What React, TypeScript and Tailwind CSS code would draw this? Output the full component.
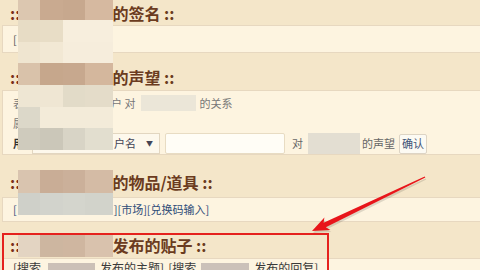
import React from 'react';

const font = { fontFamily: '"Noto Sans CJK SC", "Noto Sans", sans-serif' };

const colW = ['w-[22px]', 'w-[23px]', 'w-[22px]', 'w-[28px]'];

// mosaic over the blurred user name, top to bottom
const mosaic: { h: string; c: string[] | null }[] = [
  { h: 'h-[20px]', c: ['bg-[#dcc7b0]', 'bg-[#c9aa90]', 'bg-[#c7a88e]', 'bg-[#d6b9a0]'] },
  { h: 'h-[22px]', c: ['bg-[#e7dcc5]', 'bg-[#e8ddc6]', 'bg-[#f7eedd]', 'bg-[#f7eedd]'] },
  { h: 'h-[21px]', c: ['bg-[#efe5d0]', 'bg-[#f2e8d4]', 'bg-[#f6eddc]', 'bg-[#f6eddc]'] },
  { h: 'h-[22px]', c: ['bg-[#d9c2aa]', 'bg-[#c6a78c]', 'bg-[#c7a88e]', 'bg-[#d4b79d]'] },
  { h: 'h-[22px]', c: ['bg-[#eee6d3]', 'bg-[#efe6d3]', 'bg-[#e2dbc8]', 'bg-[#e4dcc9]'] },
  { h: 'h-[21px]', c: ['bg-[#dcd8c9]', 'bg-[#f3ebd9]', 'bg-[#f3ebd9]', 'bg-[#f3ebd9]'] },
  { h: 'h-[22px]', c: ['bg-[#cfcbbd]', 'bg-[#cbc7b9]', 'bg-[#d8d4c6]', 'bg-[#e2decf]'] },
  { h: 'h-[20px]', c: null },
  { h: 'h-[23px]', c: ['bg-[#d9c4af]', 'bg-[#c9ad96]', 'bg-[#cbb09a]', 'bg-[#d4bba5]'] },
  { h: 'h-[22px]', c: ['bg-[#cfd0c9]', 'bg-[#d2d3cc]', 'bg-[#d4d5cd]', 'bg-[#d2d3cb]'] },
  { h: 'h-[18px]', c: null },
  { h: 'h-[24px]', c: ['bg-[#e3d4c2]', 'bg-[#cdb6a0]', 'bg-[#cfb6a0]', 'bg-[#d9c2ad]'] },
];

function Title({ text }: { text: string }) {
  return (
    <div className="flex items-center pl-[10px] text-[16px] leading-[20px] font-bold text-[#6b3b20]">
      <span className="text-[#7a2e1c]">::</span>
      <span className="inline-block w-[92px]" />
      <span>{text} ::</span>
    </div>
  );
}

const row = 'ml-[2px] bg-[#fdf4e0] border-y border-l border-[#e7d8c0]';

export default function App() {
  return (
    <div className="relative w-[480px] h-[270px] overflow-hidden bg-[#f4e6c9]" style={font}>
      {/* 签名 */}
      <div className="h-[25px] flex items-center">
        <Title text="的签名" />
      </div>
      <div className={`${row} h-[28px] flex items-center pl-[10px] text-[11px] text-[#555]`}>[</div>

      {/* 声望 */}
      <div className="h-[37px] pt-[14px]">
        <Title text="的声望" />
      </div>
      <div className={`${row} h-[65px] pt-[2px] pl-[10px] text-[11px] text-[#777]`}>
        <div className="h-[20px] flex items-center">
          <span>表</span>
          <span className="ml-[87px]">户 对</span>
          <span className="ml-[6px] inline-block w-[55px] h-[16px] bg-[#ebe6d8]" />
          <span className="ml-[3px]">的关系</span>
        </div>
        <div className="h-[20px] flex items-center">属</div>
        <div className="h-[21px] flex items-center">
          <span className="font-bold text-[#333]">用</span>
          <div className="ml-[8px] w-[128px] h-[21px] border border-[#e2d6c0] bg-[#fdf8ec] flex items-center justify-end pr-[6px] text-[#445]">
            <span className="mr-[10px]">户名</span>
            <span className="text-[7px]">▼</span>
          </div>
          <div className="ml-[5px] w-[120px] h-[21px] border border-[#e8dcc3] bg-[#fffdf6] rounded-[2px]" />
          <span className="ml-[7px] text-[#666]">对</span>
          <span className="ml-[5px] inline-block w-[52px] h-[21px] bg-[#e3ded2]" />
          <span className="ml-[2px] text-[#666]">的声望</span>
          <span className="ml-[4px] h-[20px] px-[2px] flex items-center border border-[#ddd4c4] bg-[#fcfaf3] rounded-[2px] text-[#3f5478]">确认</span>
        </div>
      </div>

      {/* 物品/道具 */}
      <div className="h-[42px] pt-[17px]">
        <Title text="的物品/道具" />
      </div>
      <div className={`${row} h-[25px] flex items-center pl-[10px] text-[11px] text-[#2f4d78]`}>
        <span>[</span>
        <span className="ml-[97px]">][市场][兑换码输入]</span>
      </div>

      {/* 贴子 */}
      <div className="h-[36px] pt-[13px]">
        <Title text="发布的贴子" />
      </div>
      <div className={`${row} h-[30px] flex items-start pt-[1px] pl-[10px] text-[12px] leading-[16px] text-[#3a3a3a]`}>
        <span>[搜索</span>
        <span className="ml-[7px] inline-block w-[47px] h-[14px] mt-[3px] bg-[#cbc0b7]" />
        <span className="ml-[5px]">发布的主题]</span>
        <span className="ml-[4px]">[搜索</span>
        <span className="ml-[5px] inline-block w-[48px] h-[14px] mt-[3px] bg-[#cbc1b9]" />
        <span className="ml-[5px]">发布的回复]</span>
      </div>

      {/* mosaic over the user name */}
      <div className="absolute left-[18px] top-0 w-[95px] flex flex-col">
        {mosaic.map((m, i) => (
          <div key={i} className={`${m.h} flex`}>
            {m.c && m.c.map((c, j) => <div key={j} className={`${colW[j]} h-full ${c}`} />)}
          </div>
        ))}
      </div>

      {/* annotation */}
      <div className="absolute left-[2px] top-[233px] w-[327px] h-[50px] border-2 border-[#e5221d]" />
      <svg className="absolute inset-0 pointer-events-none" width="480" height="270" viewBox="0 0 480 270">
        <polygon
          points="313,233 331.4,232 326.8,229.3 426.3,179.5 425.7,178.5 324.6,224.7 325.4,219.4"
          fill="#000"
          opacity="0.12"
        />
        <polygon
          points="312,231 330.4,230 325.8,227.3 425.3,177.5 424.7,176.5 323.6,222.7 324.4,217.4"
          fill="#e8151a"
        />
      </svg>
    </div>
  );
}
